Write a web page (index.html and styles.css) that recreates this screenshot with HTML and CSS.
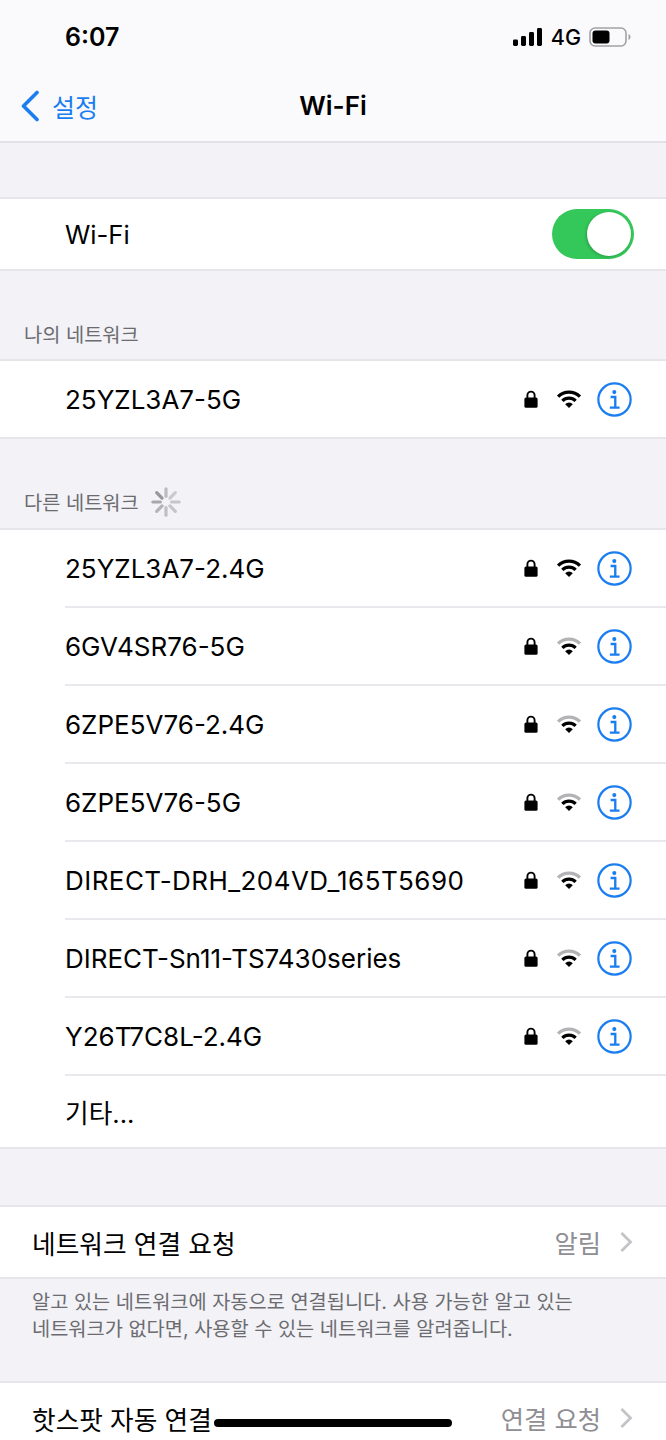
FILE: index.html
```html
<!DOCTYPE html>
<html lang="ko">

<head>
    <meta charset="utf-8">
    <title>Wi-Fi</title>
    <link rel="stylesheet" href="styles.css">
</head>

<body>
    <svg class="defs" width="0" height="0">
        <symbol id="lock" viewBox="0 0 14 18">
            <path d="M3.4 8V5.2a3.6 3.6 0 0 1 7.2 0V8" fill="none" stroke="currentColor" stroke-width="1.9"/>
            <rect x="0.4" y="7.4" width="13.2" height="10.4" rx="1.6" fill="currentColor"/>
        </symbol>
        <symbol id="info" viewBox="0 0 36 36">
            <circle cx="18" cy="18" r="16.6" fill="none" stroke="currentColor" stroke-width="2.3"/>
            <circle cx="17.8" cy="10.4" r="2.1" fill="currentColor"/>
            <path d="M14 15.4h4.800v10.800M13.200 26.400h10" fill="none" stroke="currentColor" stroke-width="2.400"/>
        </symbol>
        <symbol id="chevron" viewBox="0 0 14 22">
            <path d="M2.5 2l9 9-9 9" fill="none" stroke="currentColor" stroke-width="2.8"/>
        </symbol>
    </svg>

    <header class="topbar">
        <div class="status">
            <span class="clock">6:07</span>
            <div class="status-right">
                <svg class="signal" width="30" height="18" viewBox="0 0 30 18">
                    <rect x="0" y="11.5" width="5" height="6.5" rx="1.4"/>
                    <rect x="8" y="8" width="5" height="10" rx="1.4"/>
                    <rect x="16" y="4" width="5" height="14" rx="1.4"/>
                    <rect x="24" y="0" width="5" height="18" rx="1.4"/>
                </svg>
                <span class="net">4G</span>
                <svg class="battery" width="42" height="20" viewBox="0 0 42 20">
                    <rect x="1" y="1" width="36" height="18" rx="5" fill="none" stroke="#a2a2a4" stroke-width="1.6"/>
                    <rect x="3.5" y="3.5" width="17" height="13" rx="3" fill="#000"/>
                    <path d="M39.5 7v6c1.2-.5 2-1.6 2-3s-.8-2.500-2-3z" fill="#a2a2a4"/>
                </svg>
            </div>
        </div>
        <nav class="navbar">
            <a class="back">
                <svg width="20" height="32" viewBox="0 0 20 32">
                    <path d="M17 2.500L3.500 16 17 29.500" fill="none" stroke="currentColor" stroke-width="3.600" stroke-linecap="round" stroke-linejoin="round"/>
                </svg>
                <span>설정</span>
            </a>
            <h1>Wi-Fi</h1>
        </nav>
    </header>

    <div class="spacer s-top"></div>

    <section class="group">
        <div class="row row-short row-switch">
            <span class="name name-small">Wi-Fi</span>
            <div class="toggle"><div class="knob"></div></div>
        </div>
    </section>

    <h2 class="group-title t-mine">나의 네트워크</h2>
    <section class="group">
        <div class="row">
            <span class="name">25YZL3A7-5G</span>
            <div class="icons">
                <svg class="lock"><use href="#lock"/></svg>
                <svg class="wifi" viewBox="0 0 28 22"><path d="M2 8.400a17 17 0 0 1 24 0" class="arc"/><path d="M6.700 13a10.400 10.400 0 0 1 14.600 0" class="arc"/><path d="M14 21l-4.200-4.300a6 6 0 0 1 8.400 0z"/></svg>
                <svg class="info"><use href="#info"/></svg>
            </div>
        </div>
    </section>

    <div class="group-title t-other">
        <h2>다른 네트워크</h2>
        <svg class="spinner" width="32" height="32" viewBox="0 0 34 34">
            <g stroke-width="3.400" stroke-linecap="round">
                <path d="M17 3v8" stroke="#bcbcc0"/>
                <path d="M26.900 7.100l-5.700 5.700" stroke="#cacace"/>
                <path d="M31 17h-8" stroke="#c6c6ca"/>
                <path d="M26.900 26.900l-5.700-5.700" stroke="#c6c6ca"/>
                <path d="M17 31v-8" stroke="#c0c0c4"/>
                <path d="M7.100 26.900l5.700-5.700" stroke="#b4b4b8"/>
                <path d="M3 17h8" stroke="#a8a8ac"/>
                <path d="M7.100 7.100l5.700 5.700" stroke="#98989c"/>
            </g>
        </svg>
    </div>
    <section class="group">
        <div class="row sep">
            <span class="name">25YZL3A7-2.4G</span>
            <div class="icons">
                <svg class="lock"><use href="#lock"/></svg>
                <svg class="wifi" viewBox="0 0 28 22"><path d="M2 8.400a17 17 0 0 1 24 0" class="arc"/><path d="M6.700 13a10.400 10.400 0 0 1 14.600 0" class="arc"/><path d="M14 21l-4.200-4.300a6 6 0 0 1 8.400 0z"/></svg>
                <svg class="info"><use href="#info"/></svg>
            </div>
        </div>
        <div class="row sep">
            <span class="name">6GV4SR76-5G</span>
            <div class="icons">
                <svg class="lock"><use href="#lock"/></svg>
                <svg class="wifi" viewBox="0 0 28 22"><path d="M2 8.400a17 17 0 0 1 24 0" class="arc dim"/><path d="M6.700 13a10.400 10.400 0 0 1 14.600 0" class="arc"/><path d="M14 21l-4.200-4.300a6 6 0 0 1 8.400 0z"/></svg>
                <svg class="info"><use href="#info"/></svg>
            </div>
        </div>
        <div class="row sep">
            <span class="name">6ZPE5V76-2.4G</span>
            <div class="icons">
                <svg class="lock"><use href="#lock"/></svg>
                <svg class="wifi" viewBox="0 0 28 22"><path d="M2 8.400a17 17 0 0 1 24 0" class="arc dim"/><path d="M6.700 13a10.400 10.400 0 0 1 14.600 0" class="arc"/><path d="M14 21l-4.200-4.300a6 6 0 0 1 8.400 0z"/></svg>
                <svg class="info"><use href="#info"/></svg>
            </div>
        </div>
        <div class="row sep">
            <span class="name">6ZPE5V76-5G</span>
            <div class="icons">
                <svg class="lock"><use href="#lock"/></svg>
                <svg class="wifi" viewBox="0 0 28 22"><path d="M2 8.400a17 17 0 0 1 24 0" class="arc dim"/><path d="M6.700 13a10.400 10.400 0 0 1 14.600 0" class="arc"/><path d="M14 21l-4.200-4.300a6 6 0 0 1 8.400 0z"/></svg>
                <svg class="info"><use href="#info"/></svg>
            </div>
        </div>
        <div class="row sep">
            <span class="name name-wide">DIRECT-DRH_204VD_165T5690</span>
            <div class="icons">
                <svg class="lock"><use href="#lock"/></svg>
                <svg class="wifi" viewBox="0 0 28 22"><path d="M2 8.400a17 17 0 0 1 24 0" class="arc dim"/><path d="M6.700 13a10.400 10.400 0 0 1 14.600 0" class="arc"/><path d="M14 21l-4.200-4.300a6 6 0 0 1 8.400 0z"/></svg>
                <svg class="info"><use href="#info"/></svg>
            </div>
        </div>
        <div class="row sep">
            <span class="name">DIRECT-Sn11-TS7430series</span>
            <div class="icons">
                <svg class="lock"><use href="#lock"/></svg>
                <svg class="wifi" viewBox="0 0 28 22"><path d="M2 8.400a17 17 0 0 1 24 0" class="arc dim"/><path d="M6.700 13a10.400 10.400 0 0 1 14.600 0" class="arc"/><path d="M14 21l-4.200-4.300a6 6 0 0 1 8.400 0z"/></svg>
                <svg class="info"><use href="#info"/></svg>
            </div>
        </div>
        <div class="row sep">
            <span class="name">Y26T7C8L-2.4G</span>
            <div class="icons">
                <svg class="lock"><use href="#lock"/></svg>
                <svg class="wifi" viewBox="0 0 28 22"><path d="M2 8.400a17 17 0 0 1 24 0" class="arc dim"/><path d="M6.700 13a10.400 10.400 0 0 1 14.600 0" class="arc"/><path d="M14 21l-4.200-4.300a6 6 0 0 1 8.400 0z"/></svg>
                <svg class="info"><use href="#info"/></svg>
            </div>
        </div>
        <div class="row row-last">
            <span class="name name-small">기타...</span>
        </div>
    </section>

    <div class="spacer s-mid"></div>

    <section class="group">
        <div class="row row-short row-plain">
            <span class="name name-ko">네트워크 연결 요청</span>
            <div class="detail"><span>알림</span><svg class="chevron"><use href="#chevron"/></svg></div>
        </div>
    </section>
    <p class="note">알고 있는 네트워크에 자동으로 연결됩니다. 사용 가능한 알고 있는 네트워크가 없다면, 사용할 수 있는 네트워크를 알려줍니다.</p>
    <section class="group">
        <div class="row row-short row-plain">
            <span class="name name-ko">핫스팟 자동 연결</span>
            <div class="detail"><span>연결 요청</span><svg class="chevron"><use href="#chevron"/></svg></div>
        </div>
    </section>

    <div class="home-bar"></div>
</body>

</html>
```

FILE: styles.css
```css
html,
body {
    margin: 0;
    height: 1440px;
    overflow: hidden;
}

body {
    position: relative;
    background-color: #f2f2f7;
    font-family: "Inter", "Noto Sans CJK KR", sans-serif;
    color: #000;
}

.defs {
    position: absolute;
}

.topbar {
    height: 141px;
    background-color: #fafafd;
    border-bottom: solid 2px #e2e2e6;
}

.status {
    height: 70px;
    display: flex;
    align-items: center;
    justify-content: space-between;
    padding: 4px 35px 0 65px;
    box-sizing: border-box;
}

.clock {
    font-size: 25px;
    font-weight: 600;
}

.status-right {
    display: flex;
    align-items: center;
    gap: 8px;
}

.net {
    font-size: 21.5px;
    font-weight: 500;
}

.navbar {
    height: 71px;
    position: relative;
    display: flex;
    align-items: center;
    justify-content: center;
}

.navbar h1 {
    margin: 0;
    font-size: 26px;
    font-weight: 600;
}

.back {
    position: absolute;
    left: 20px;
    top: 18px;
    display: flex;
    align-items: center;
    gap: 12px;
    color: #1a7df0;
    font-size: 25px;
}

.spacer.s-top {
    height: 54px;
}

.spacer.s-mid {
    height: 56px;
}

.group {
    background-color: #fff;
    border-top: solid 2px #e5e5ea;
    border-bottom: solid 2px #e5e5ea;
}

.row {
    height: 76px;
    margin-left: 65px;
    padding-right: 34px;
    display: flex;
    align-items: center;
    justify-content: space-between;
    box-sizing: border-box;
}

.row.sep {
    height: 78px;
    border-bottom: solid 2px #e9e9ed;
}

.row-short {
    height: 70px;
}

.row-last {
    height: 71px;
}

.row-switch {
    padding-right: 32px;
}

.row-plain {
    margin-left: 32px;
    padding-right: 33px;
}

.name {
    font-size: 26px;
}

.name-wide {
    letter-spacing: 0.45px;
}

.name-small {
    font-size: 25.7px;
}

.name-ko {
    font-size: 25.7px;
}

.group-title {
    margin: 0;
    height: 88px;
    box-sizing: border-box;
    padding: 48px 0 0 24px;
    font-size: 19.8px;
    font-weight: 400;
    color: #6c6c70;
}

.group-title.t-other {
    height: 89px;
    display: flex;
    align-items: flex-start;
    gap: 11px;
}

.group-title h2 {
    margin: 0;
    font-size: 19.8px;
    font-weight: 400;
}

.spinner {
    margin-top: -1px;
}

.toggle {
    width: 82px;
    height: 50px;
    border-radius: 25px;
    background-color: #34c759;
    position: relative;
}

.knob {
    position: absolute;
    right: 3px;
    top: 3px;
    width: 44px;
    height: 44px;
    border-radius: 50%;
    background-color: #fff;
    box-shadow: -1px 1px 3px rgba(0, 0, 0, 0.2);
}

.icons {
    display: flex;
    align-items: center;
}

.lock {
    width: 14px;
    height: 18px;
    color: #000;
}

.wifi {
    width: 26px;
    height: 20px;
    margin-left: 18px;
}

.arc {
    fill: none;
    stroke: #000;
    stroke-width: 3.600;
}

.arc.dim {
    stroke: #b3b3b6;
}

.info {
    width: 35px;
    height: 35px;
    margin-left: 15px;
    color: #1a7df0;
}

.detail {
    display: flex;
    align-items: center;
    gap: 18px;
    color: #8e8e93;
    font-size: 25.3px;
}

.chevron {
    width: 14px;
    height: 22px;
    color: #c4c4c8;
}

.note {
    margin: 0;
    height: 102px;
    box-sizing: border-box;
    padding: 10px 80px 0 32px;
    font-size: 19.75px;
    line-height: 27px;
    color: #6c6c70;
}

.home-bar {
    position: absolute;
    left: 214px;
    top: 1419px;
    width: 238px;
    height: 8px;
    border-radius: 4px;
    background-color: #000;
}
```
